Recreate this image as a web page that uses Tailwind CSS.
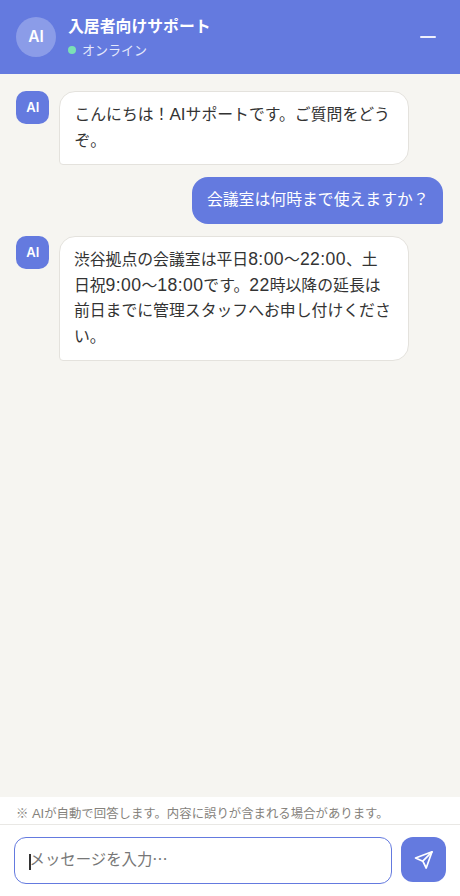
<!DOCTYPE html>
<html lang="ja">
<head>
<meta charset="utf-8">
<title>入居者向けサポート</title>
<script src="https://cdn.jsdelivr.net/npm/@tailwindcss/browser@4"></script>
</head>
<body class="w-[460px] h-[896px] overflow-hidden flex flex-col bg-[#f6f5f1] text-[#333] font-['Inter','Noto_Sans_CJK_JP',sans-serif]">
  <header class="h-[74px] shrink-0 bg-[#647adf] flex items-center pl-4 pr-6 text-white">
    <div class="size-10 rounded-full bg-[#8b9ce8] flex items-center justify-center text-[15.5px] font-semibold">AI</div>
    <div class="ml-3 mt-[2px] flex-1">
      <h1 class="text-[15.85px] leading-6 font-bold whitespace-nowrap">入居者向けサポート</h1>
      <div class="flex items-center gap-1.5 text-[13px] leading-[23px] text-[#e5e9fb]"><span class="size-2 rounded-full bg-[#7be0b5]"></span>オンライン</div>
    </div>
    <button class="w-4 h-0.5 rounded-full bg-[#eef0fc]" aria-label="最小化"></button>
  </header>
  <main class="flex-1 px-4 pt-[17px] flex flex-col gap-3 text-[15.85px] leading-[25.6px]">
    <div class="flex items-start gap-[9.5px]">
      <div class="size-[33px] ml-[0.4px] shrink-0 rounded-[10px] bg-[#647adf] text-white text-[13px] leading-none font-semibold flex items-center justify-center">AI</div>
      <div class="w-[350px] h-[74px] bg-white border border-[#e4e2dd] rounded-[16px] rounded-bl-[4px] pt-[10px] pl-[14.5px] whitespace-nowrap">こんにちは！<span class="font-['Liberation_Sans'] text-[17px] leading-none">AI</span>サポートです。ご質問をどう<br>ぞ。</div>
    </div>
    <div class="self-end mr-[0.6px] w-[251px] h-[47px] bg-[#647adf] text-white rounded-[16px] rounded-br-[4px] pt-[10px] pl-[14.5px] whitespace-nowrap">会議室は何時まで使えますか？</div>
    <div class="flex items-start gap-[9.5px]">
      <div class="size-[33px] ml-[0.4px] shrink-0 rounded-[10px] bg-[#647adf] text-white text-[13px] leading-none font-semibold flex items-center justify-center">AI</div>
      <div class="w-[350px] h-[125px] bg-white border border-[#e4e2dd] rounded-[16px] rounded-bl-[4px] pt-[10px] pl-[14px] whitespace-nowrap">渋谷拠点の会議室は平日<span class="font-['Liberation_Sans'] text-[17.6px] leading-none tracking-[0.4px]">8:00</span>〜<span class="font-['Liberation_Sans'] text-[17.6px] leading-none tracking-[0.4px]">22:00</span>、土<br>日祝<span class="font-['Liberation_Sans'] text-[17.6px] leading-none tracking-[0.4px]">9:00</span>〜<span class="font-['Liberation_Sans'] text-[17.6px] leading-none tracking-[0.4px]">18:00</span>です。<span class="font-['Liberation_Sans'] text-[17.6px] leading-none tracking-[0.4px]">22</span>時以降の延長は<br>前日までに管理スタッフへお申し付けくださ<br>い。</div>
    </div>
  </main>
  <p class="h-[28px] shrink-0 bg-white border-b border-[#e9e8e5] pl-4 pt-[5px] text-[12.4px] leading-[22px] text-[#85827c] whitespace-nowrap"><span class="font-['Noto_Sans_CJK_JP']">※</span> <span class="font-['Liberation_Sans'] text-[13px] leading-none">AI</span>が自動で回答します。内容に誤りが含まれる場合があります。</p>
  <footer class="h-[71px] shrink-0 bg-white pl-[14px] pr-[14px] pt-3 flex gap-[9px]">
    <div class="w-[378px] h-[47px] rounded-[12px] border-[1.5px] border-[#647adf] flex items-center pl-[14px] text-[15.4px] text-[#777]">
      <span class="w-[1.5px] h-4 bg-[#333] mt-0.5"></span><span class="-ml-px -mt-[3px] font-['Noto_Sans_CJK_JP']">メッセージを入力⋯</span>
    </div>
    <button class="size-[45px] rounded-[12px] bg-[#647adf] flex items-center justify-center" aria-label="送信">
      <svg class="w-5 h-5" viewBox="0 0 20 20" fill="none" stroke="#fff" stroke-width="1.7" stroke-linejoin="round" stroke-linecap="round"><path d="M18 1.8 1.5 8 8.8 11.2 12.2 18Z"/><path d="M18 1.8 8.8 11.2"/></svg>
    </button>
  </footer>
</body>
</html>
